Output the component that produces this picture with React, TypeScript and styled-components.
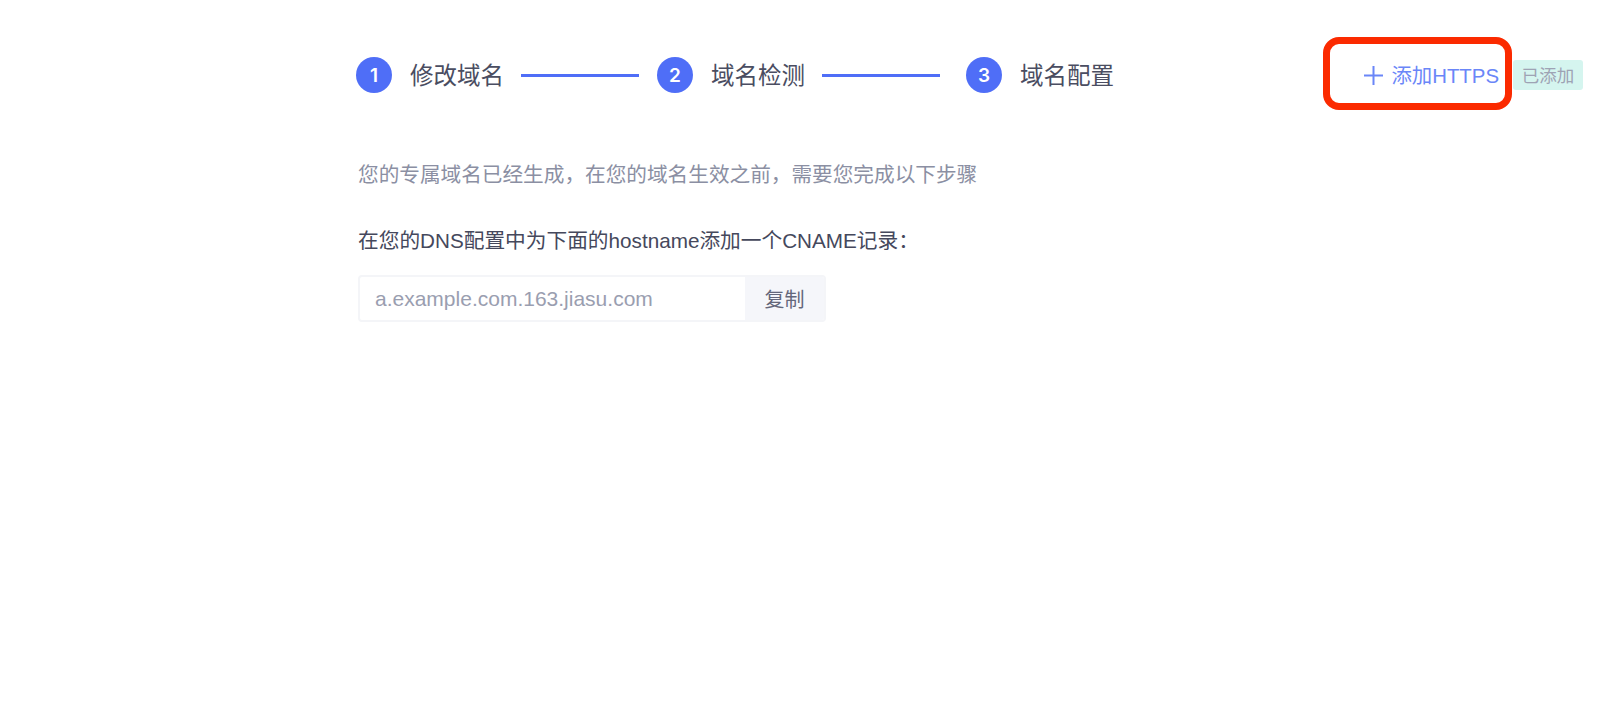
import React from "react";
import styled, { createGlobalStyle } from "styled-components";

const Global = createGlobalStyle`
  html, body { margin: 0; padding: 0; background: #fff; }
  body { font-family: "Noto Sans CJK SC", "Liberation Sans", sans-serif; }
`;
const latin = `"Liberation Sans", "Noto Sans CJK SC", sans-serif`;

const Page = styled.div`
  width: 1608px;
  height: 714px;
  overflow: hidden;
  display: flex;
  flex-direction: column;
  box-sizing: border-box;
  padding: 57px 25px 0 356px;
`;
const Header = styled.header`
  display: flex;
  align-items: center;
  height: 36px;
`;
const Steps = styled.ol`
  display: flex;
  align-items: center;
  list-style: none;
  margin: 0;
  padding: 0;
`;
const Step = styled.li`
  display: flex;
  align-items: center;
  gap: 18px;
`;
const StepBadge = styled.span`
  width: 36px;
  height: 36px;
  border-radius: 50%;
  background: #4f6ef7;
  color: #fff;
  display: flex;
  align-items: center;
  justify-content: center;
  font: 600 19px "Inter", sans-serif;
`;
const StepLabel = styled.span`
  font-size: 23.5px;
  line-height: 34px;
  padding-bottom: 2px;
  color: #4a4d61;
`;
const Connector = styled.span<{ $after: number }>`
  display: block;
  width: 118px;
  height: 3px;
  margin: 0 ${(p) => p.$after}px 0 17px;
  background: #4f6ef7;
`;
const Actions = styled.div`
  margin-left: auto;
  display: flex;
  align-items: center;
`;
const AddLink = styled.a`
  position: relative;
  display: flex;
  align-items: center;
  gap: 8px;
  color: #6a86f8;
  font-size: 20.4px;
  font-family: ${latin};
  margin-right: 14px;
`;
const AddText = styled.span`
  white-space: nowrap;
  margin-top: -2px;
`;
const Highlight = styled.span`
  position: absolute;
  left: -41px;
  right: -13px;
  top: -24px;
  bottom: -21px;
  box-sizing: border-box;
  border: 7px solid #fb2a00;
  border-radius: 16px;
  pointer-events: none;
`;
const Tag = styled.span`
  width: 70px;
  height: 30px;
  border-radius: 3px;
  background: #d5f5ef;
  color: #9ea3b4;
  font-size: 17.5px;
  line-height: 30px;
  text-align: center;
`;
const Intro = styled.p`
  margin: 60px 0 0 2px;
  font-size: 20.65px;
  line-height: 40px;
  color: #8b8fa3;
`;
const Instruction = styled.p`
  margin: 28px 0 0 2px;
  font-size: 20.7px;
  line-height: 40px;
  color: #45485c;
  font-family: ${latin};
`;
const Field = styled.div`
  display: flex;
  width: 468px;
  height: 47px;
  margin: 14px 0 0 2px;
  box-sizing: border-box;
  border: 2px solid #f4f5f8;
  border-radius: 4px;
  overflow: hidden;
`;
const Value = styled.div`
  flex: 1;
  padding-left: 15px;
  font: 21px/43px ${latin};
  color: #9a9eb0;
`;
const CopyButton = styled.button`
  width: 79px;
  border: 0;
  padding: 0;
  background: #f5f6fa;
  color: #64677a;
  font-size: 20px;
  font-family: inherit;
`;

export default function App() {
  const steps = ["修改域名", "域名检测", "域名配置"];
  const afterGaps = [18, 26];
  return (
    <Page>
      <Global />
      <Header>
        <Steps>
          {steps.map((label, i) => (
            <React.Fragment key={label}>
              <Step>
                <StepBadge>{i + 1}</StepBadge>
                <StepLabel>{label}</StepLabel>
              </Step>
              {i < steps.length - 1 && <Connector $after={afterGaps[i]} />}
            </React.Fragment>
          ))}
        </Steps>
        <Actions>
          <AddLink>
            <svg width="19" height="19" viewBox="0 0 19 19" fill="none" stroke="#6a86f8" strokeWidth="2">
              <path d="M9.5 0v19M0 9.5h19" />
            </svg>
            <AddText>添加HTTPS</AddText>
            <Highlight />
          </AddLink>
          <Tag>已添加</Tag>
        </Actions>
      </Header>
      <Intro>您的专属域名已经生成，在您的域名生效之前，需要您完成以下步骤</Intro>
      <Instruction>在您的DNS配置中为下面的hostname添加一个CNAME记录：</Instruction>
      <Field>
        <Value>a.example.com.163.jiasu.com</Value>
        <CopyButton>复制</CopyButton>
      </Field>
    </Page>
  );
}
